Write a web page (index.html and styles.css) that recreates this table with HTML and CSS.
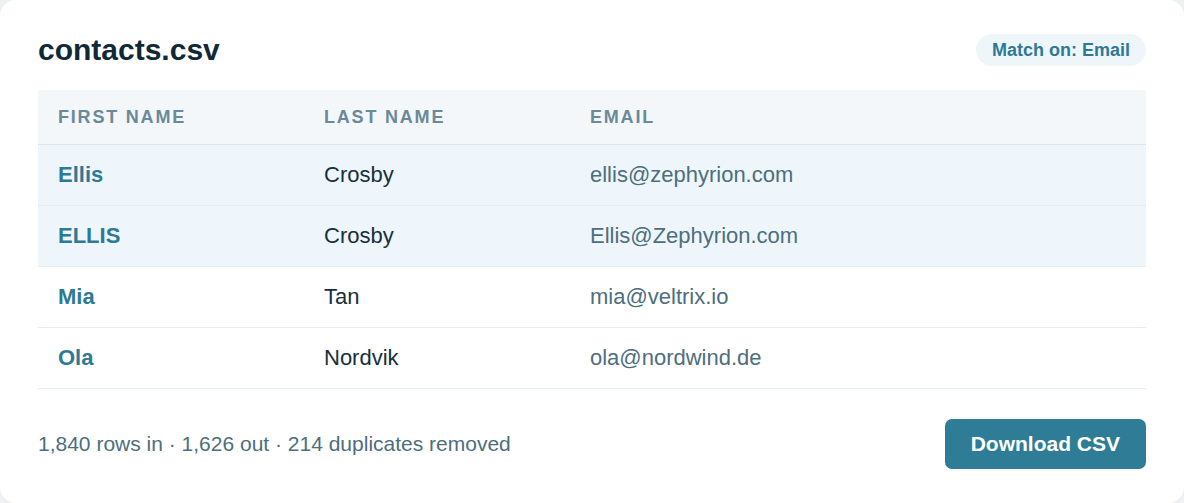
FILE: index.html
```html
<!DOCTYPE html>
<html lang="en">
<head>
<meta charset="utf-8">
<title>contacts.csv</title>
<link rel="stylesheet" href="styles.css">
</head>
<body>
<main class="card">
  <header class="card-head">
    <h1 class="title">contacts.csv</h1>
    <span class="badge">Match on: Email</span>
  </header>
  <table class="grid">
    <colgroup>
      <col class="c-first">
      <col class="c-last">
      <col class="c-email">
    </colgroup>
    <thead>
      <tr><th>First name</th><th>Last name</th><th>Email</th></tr>
    </thead>
    <tbody>
      <tr class="dup"><td class="first">Ellis</td><td class="last">Crosby</td><td class="email">ellis@zephyrion.com</td></tr>
      <tr class="dup"><td class="first">ELLIS</td><td class="last">Crosby</td><td class="email">Ellis@Zephyrion.com</td></tr>
      <tr><td class="first">Mia</td><td class="last">Tan</td><td class="email">mia@veltrix.io</td></tr>
      <tr><td class="first">Ola</td><td class="last">Nordvik</td><td class="email">ola@nordwind.de</td></tr>
    </tbody>
  </table>
  <footer class="card-foot">
    <p class="summary">1,840 rows in · 1,626 out · 214 duplicates removed</p>
    <button class="btn" type="button">Download CSV</button>
  </footer>
</main>
</body>
</html>
```

FILE: styles.css
```css
* { box-sizing: border-box; }
html, body { margin: 0; padding: 0; }
body {
  background: #eef1f3;
  font-family: "Liberation Sans", Arial, sans-serif;
  width: 1184px;
  height: 503px;
  overflow: hidden;
}
.card {
  background: #ffffff;
  border-radius: 16px;
  height: 503px;
  padding: 34px 38px 34px 38px;
  display: flex;
  flex-direction: column;
}
.card-head {
  display: flex;
  align-items: center;
  justify-content: space-between;
  height: 32px;
  margin-bottom: 24px;
}
.title {
  margin: 0;
  font-size: 30px;
  font-weight: 700;
  color: #0f2a36;
  line-height: 32px;
}
.badge {
  background: #eef6fa;
  color: #2e7a94;
  font-weight: 700;
  font-size: 18px;
  line-height: 22px;
  padding: 5px 16px;
  border-radius: 16px;
}
.grid {
  width: 100%;
  border-collapse: collapse;
  table-layout: fixed;
}
.c-first, .c-last { width: 266px; }
.grid th {
  background: #f3f7f9;
  color: #6b8998;
  text-transform: uppercase;
  letter-spacing: 0.1em;
  font-size: 18px;
  font-weight: 700;
  text-align: left;
  line-height: 22px;
  padding: 16px 20px;
  border-bottom: 1px solid #dce5ea;
}
.grid td {
  font-size: 22px;
  line-height: 26px;
  padding: 17px 20px;
  border-bottom: 1px solid #e7edf0;
}
.grid tr.dup td { background: #eef6fb; }
.first { color: #2e7a94; font-weight: 700; }
.last { color: #17303a; }
.email { color: #4d6e7c; }
.card-foot {
  margin-top: 30px;
  display: flex;
  align-items: center;
  justify-content: space-between;
}
.summary {
  margin: 0;
  font-size: 21px;
  color: #4d6e7c;
}
.btn {
  font-family: inherit;
  background: #2f7c96;
  color: #ffffff;
  border: 0;
  border-radius: 7px;
  font-size: 21px;
  font-weight: 700;
  height: 50px;
  padding: 0 26px;
}
```
